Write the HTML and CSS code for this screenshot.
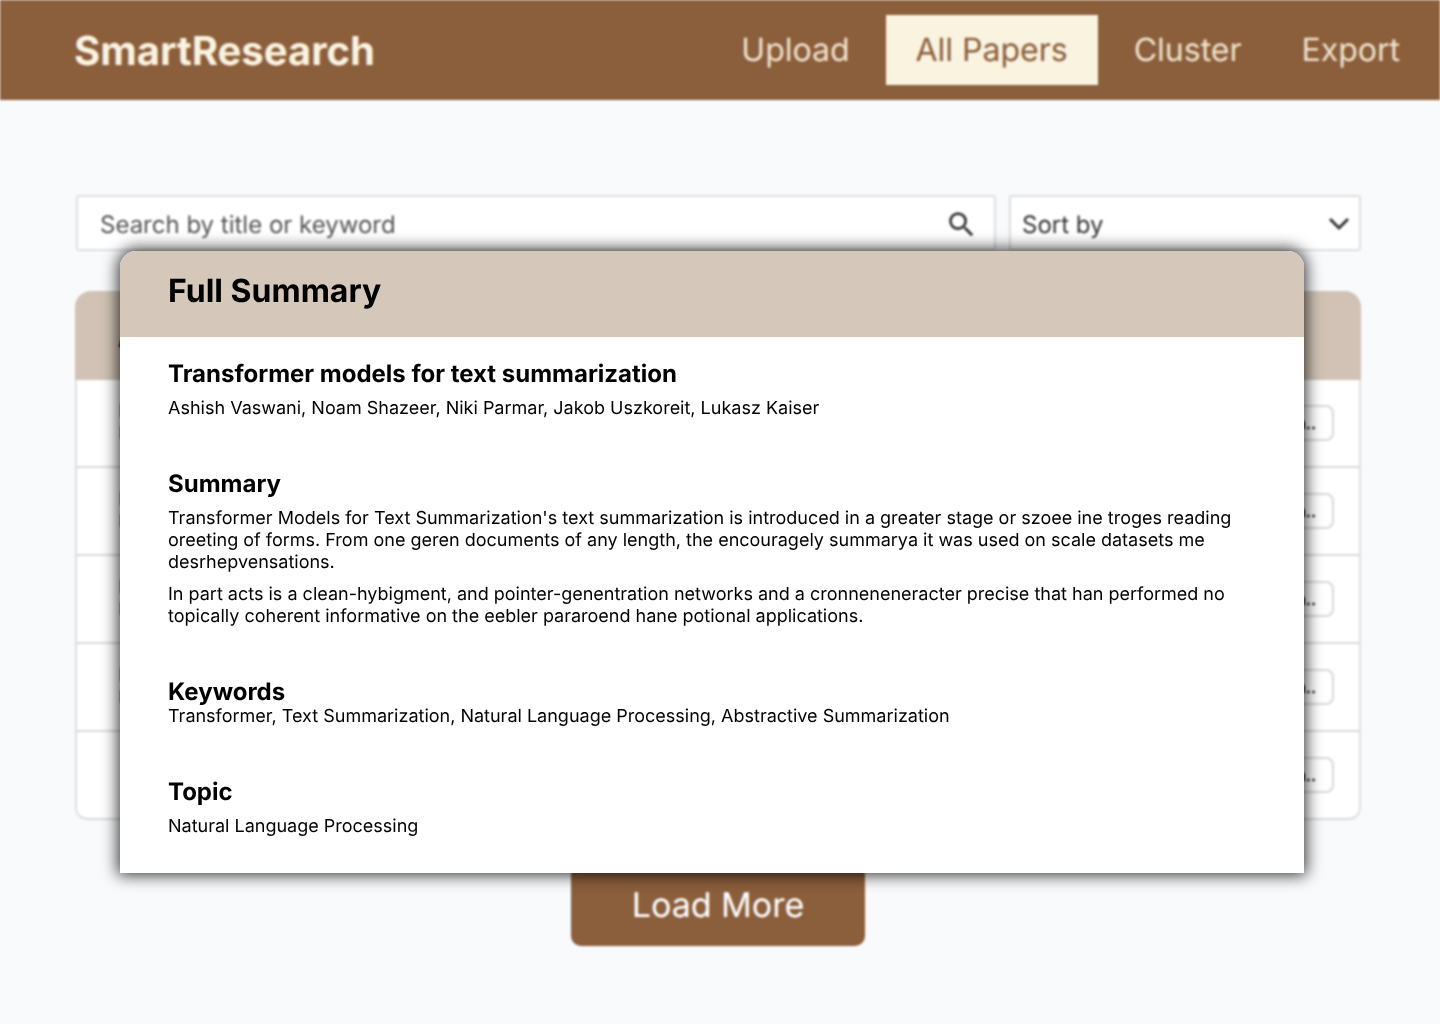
FILE: index.html
```html
<!DOCTYPE html>
<html lang="en">
<head>
<meta charset="utf-8">
<meta name="viewport" content="width=device-width, initial-scale=1">
<title>SmartResearch – All Papers</title>
<link rel="stylesheet" href="styles.css">
</head>
<body>
<div class="page">
  <header class="topbar">
    <a class="brand" href="#">SmartResearch</a>
    <nav class="nav" aria-label="Main">
      <a class="nav-link" href="#">Upload</a>
      <a class="nav-link nav-link-active" href="#" aria-current="page">All Papers</a>
      <a class="nav-link" href="#">Cluster</a>
      <a class="nav-link" href="#">Export</a>
    </nav>
  </header>

  <main class="content">
    <form class="filters">
      <div class="field search">
        <input class="search-input" type="text" placeholder="Search by title or keyword" aria-label="Search by title or keyword">
        <button class="search-button" type="button" aria-label="Search">
          <svg width="33" height="33" viewBox="0 0 24 24" fill="currentColor" aria-hidden="true"><path d="M15.5 14h-.79l-.28-.27A6.471 6.471 0 0 0 16 9.500 6.500 6.500 0 1 0 9.500 16c1.610 0 3.090-.590 4.230-1.570l.270.280v.790l5 4.990L20.490 19l-4.990-5zm-6 0C7.010 14 5 11.990 5 9.500S7.010 5 9.500 5 14 7.010 14 9.500 11.990 14 9.500 14z"/></svg>
        </button>
      </div>
      <div class="field sort">
        <select class="sort-select" aria-label="Sort by">
          <option>Sort by</option>
        </select>
        <svg class="sort-arrow" width="20" height="14" viewBox="0 0 20 14" fill="none" stroke="currentColor" stroke-width="3" aria-hidden="true"><path d="M1 2 10 11 19 2"/></svg>
      </div>
    </form>

    <div class="papers">
      <table class="table">
        <thead>
          <tr><th scope="col">Authors</th><th scope="col" class="actions"></th></tr>
        </thead>
        <tbody>
          <tr><td>Deep<br>Nets</td><td class="actions"><button class="more" type="button">Full Sum..</button></td></tr>
          <tr><td>Deep<br>Nets</td><td class="actions"><button class="more" type="button">Full Sum..</button></td></tr>
          <tr><td>NLP<br>Base</td><td class="actions"><button class="more" type="button">Full Sum..</button></td></tr>
          <tr><td>NLP<br>Base</td><td class="actions"><button class="more" type="button">Full Sum..</button></td></tr>
          <tr><td></td><td class="actions"><button class="more" type="button">Full Sum..</button></td></tr>
        </tbody>
      </table>
    </div>

    <button class="load-more" type="button">Load More</button>
  </main>
</div>

<div class="overlay">
  <section class="dialog" role="dialog" aria-modal="true" aria-labelledby="dialog-title">
    <header class="dialog-header">
      <h1 class="dialog-title" id="dialog-title">Full Summary</h1>
    </header>
    <div class="dialog-body">
      <section class="block">
        <h2 class="heading">Transformer models for text summarization</h2>
        <p class="text">Ashish Vaswani, Noam Shazeer, Niki Parmar, Jakob Uszkoreit, Lukasz Kaiser</p>
      </section>
      <section class="block">
        <h2 class="heading">Summary</h2>
        <p class="text">Transformer Models for Text Summarization's text summarization is introduced in a greater stage or szoee ine troges reading oreeting of forms. From one geren documents of any length, the encouragely summarya it was used on scale datasets me desrhepvensations.</p>
        <p class="text">In part acts is a clean-hybigment, and pointer-genentration networks and a cronneneneracter precise that han performed no topically coherent informative on the eebler pararoend hane potional applications.</p>
      </section>
      <section class="block block-tight">
        <h2 class="heading">Keywords</h2>
        <p class="text">Transformer, Text Summarization, Natural Language Processing, Abstractive Summarization</p>
      </section>
      <section class="block">
        <h2 class="heading">Topic</h2>
        <p class="text">Natural Language Processing</p>
      </section>
    </div>
  </section>
</div>
</body>
</html>
```
FILE: styles.css
```css
* {
  box-sizing: border-box;
}

body {
  margin: 0;
  position: relative;
  min-height: 100vh;
  background: #f9fafc;
  color: #000;
  font-family: Inter, "Liberation Sans", sans-serif;
  text-rendering: geometricPrecision;
}

h1, h2, p {
  margin: 0;
}

button, input, select {
  font: inherit;
  color: inherit;
  text-rendering: inherit;
}

/* Page behind the dialog */
.page {
  filter: blur(1px);
}

.topbar {
  display: flex;
  align-items: center;
  justify-content: space-between;
  height: 100px;
  padding: 0 10px 0 74px;
  background: #8b5e3c;
}

.brand {
  color: #faf3e0;
  font-size: 40px;
  font-weight: 700;
  text-decoration: none;
}

.nav {
  display: flex;
}

.nav-link {
  padding: 0 30px;
  color: #f0e2cc;
  font-size: 32px;
  line-height: 70px;
  text-decoration: none;
}

.nav-link-active {
  margin: 0 6px;
  background: #faf3e0;
  color: #8b5e3c;
}

.content {
  display: flex;
  flex-direction: column;
  padding: 95px 79px 78px 75px;
}

.filters {
  display: flex;
  gap: 13px;
  padding-left: 1px;
}

.field {
  display: flex;
  align-items: center;
  height: 56px;
  background: #fff;
  border: 2px solid #dedfe1;
  border-radius: 3px;
  font-size: 24px;
  color: #333;
}

.search {
  flex: 1;
  padding: 2px 16px 0 22px;
}

.search-input {
  flex: 1;
  min-width: 0;
  padding: 0;
  border: 0;
  outline: 0;
  background: none;
}

.search-input::placeholder {
  color: #555;
  opacity: 1;
}

.search-button {
  display: flex;
  padding: 0;
  border: 0;
  background: none;
}

.sort {
  position: relative;
  width: 352px;
  padding-top: 2px;
}

.sort-select {
  width: 100%;
  height: 100%;
  padding: 0 11px;
  border: 0;
  background: none;
  appearance: none;
}

.sort-arrow {
  position: absolute;
  right: 10px;
  pointer-events: none;
}

.papers {
  margin-top: 40px;
  overflow: hidden;
  border-radius: 16px 16px 12px 12px;
}

.table {
  width: 100%;
  border-collapse: separate;
  border-spacing: 0;
}

.table th {
  height: 89px;
  padding: 6px 43px 0;
  background: #d1c2b5;
  font-size: 24px;
  text-align: left;
}

.table td {
  height: 88px;
  padding: 0 42px;
  background: #fff;
  border-bottom: 2px solid #d9d9d9;
  font-size: 18px;
  line-height: 22px;
}

.table td:first-child {
  border-left: 2px solid #dedfe1;
}

.table td:last-child {
  border-right: 2px solid #dedfe1;
}

.table tr:last-child td:first-child {
  border-bottom-left-radius: 12px;
}

.table tr:last-child td:last-child {
  border-bottom-right-radius: 12px;
}

.table .actions {
  padding-right: 25px;
  text-align: right;
}

.more {
  height: 36px;
  padding: 0 16px;
  background: #fff;
  border: 2px solid #d9d9d9;
  border-radius: 8px;
  font-size: 16px;
  font-weight: 600;
}

.load-more {
  align-self: center;
  width: 294px;
  height: 82px;
  margin-top: 44px;
  border: 0;
  border-radius: 10px;
  background: #8b5e3c;
  color: #fff;
  font-size: 34px;
}

/* Full summary dialog */
.overlay {
  position: absolute;
  inset: 0;
  padding: 251px 136px 0 120px;
}

.dialog {
  background: #fff;
  border-radius: 16px 16px 0 0;
  box-shadow: 0 0 16px 2px rgba(0, 0, 0, 0.8);
}

.dialog-header {
  height: 86px;
  padding: 20px 48px;
  background: #d5c7ba;
  border-radius: 16px 16px 0 0;
}

.dialog-title {
  font-size: 32px;
  line-height: 40px;
}

.dialog-body {
  display: flex;
  flex-direction: column;
  gap: 50px;
  padding: 23px 48px 35px;
}

.block {
  display: flex;
  flex-direction: column;
  gap: 10px;
}

.block-tight {
  gap: 0;
}

.heading {
  font-size: 24px;
  line-height: 28px;
}

.text {
  font-size: 18px;
  line-height: 22px;
}
```
